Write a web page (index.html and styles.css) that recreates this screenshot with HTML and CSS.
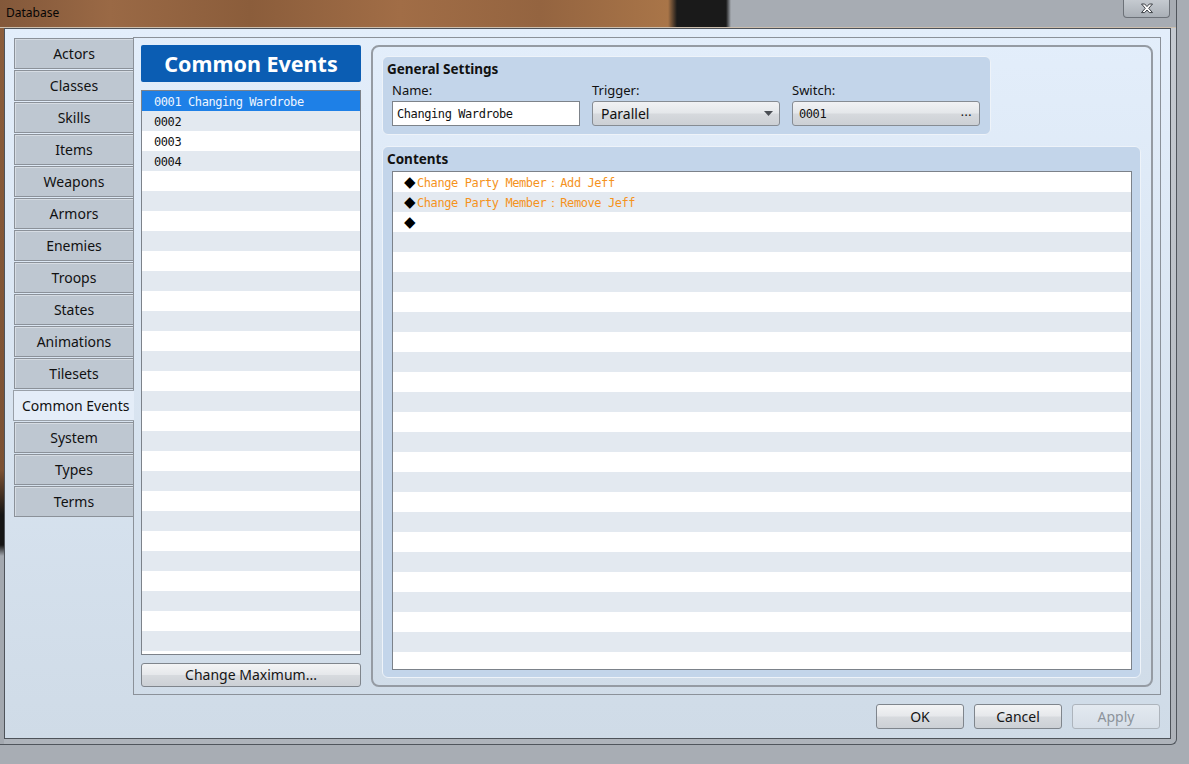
FILE: index.html
```html
<!DOCTYPE html>
<html lang="en">

<head>
  <meta charset="UTF-8">
  <title>Database</title>
  <link rel="stylesheet" href="styles.css">
</head>

<body>
  <div class="window">
    <div class="titlebar">
      <span class="title">Database</span>
      <div class="close">
        <svg width="14" height="11" viewBox="0 0 14 11">
          <path d="M1.5 1h3.2l2.3 2.6 2.3-2.6h3.2l-3.8 4.3 3.8 4.3h-3.2l-2.3-2.6-2.3 2.6h-3.2l3.8-4.3z" fill="#fff" stroke="#3a3e44" stroke-width="1" stroke-linejoin="round"/>
        </svg>
      </div>
    </div>
    <div class="client">
      <div class="main">
        <ul class="tabs">
          <li class="tab">Actors</li>
          <li class="tab">Classes</li>
          <li class="tab">Skills</li>
          <li class="tab">Items</li>
          <li class="tab">Weapons</li>
          <li class="tab">Armors</li>
          <li class="tab">Enemies</li>
          <li class="tab">Troops</li>
          <li class="tab">States</li>
          <li class="tab">Animations</li>
          <li class="tab">Tilesets</li>
          <li class="tab active">Common Events</li>
          <li class="tab">System</li>
          <li class="tab">Types</li>
          <li class="tab">Terms</li>
        </ul>
        <div class="page">
          <div class="events">
            <div class="events-title">Common Events</div>
            <ul class="list event-list">
              <li class="row selected">0001 Changing Wardrobe</li>
              <li class="row">0002</li>
              <li class="row">0003</li>
              <li class="row">0004</li>
            </ul>
            <button class="btn">Change Maximum...</button>
          </div>
          <div class="editor">
            <section class="group general">
              <h3>General Settings</h3>
              <div class="fields">
                <div class="field">
                  <span class="label">Name:</span>
                  <div class="input mono">Changing Wardrobe</div>
                </div>
                <div class="field">
                  <span class="label">Trigger:</span>
                  <div class="select">
                    <span>Parallel</span>
                    <svg width="9" height="5" viewBox="0 0 9 5"><path d="M0 0h9L4.5 5z" fill="#4a4e54"/></svg>
                  </div>
                </div>
                <div class="field">
                  <span class="label">Switch:</span>
                  <div class="picker">
                    <span class="mono">0001</span>
                    <span class="dots">...</span>
                  </div>
                </div>
              </div>
            </section>
            <section class="group contents">
              <h3>Contents</h3>
              <ul class="list command-list">
                <li class="row command"><span class="dia">◆</span>Change Party Member<span class="colon">：</span>Add Jeff</li>
                <li class="row command"><span class="dia">◆</span>Change Party Member<span class="colon">：</span>Remove Jeff</li>
                <li class="row command"><span class="dia">◆</span></li>
              </ul>
            </section>
          </div>
        </div>
      </div>
      <div class="footer">
        <button class="btn action">OK</button>
        <button class="btn action">Cancel</button>
        <button class="btn action" disabled>Apply</button>
      </div>
    </div>
  </div>
</body>

</html>
```

FILE: styles.css
```css
body {
  margin: 0;
  width: 1189px;
  height: 764px;
  overflow: hidden;
  background: #a8adb4;
  font-family: "Noto Sans", "Liberation Sans", sans-serif;
  color: #111;
}

.window {
  width: 1177px;
  height: 745px;
  box-sizing: border-box;
  display: flex;
  flex-direction: column;
  background:
    linear-gradient(to bottom, #8c5e3c 0, #7b5133 470px, #151515 515px, #151515 545px, #a3a8af 556px) left top / 4px 100% no-repeat,
    linear-gradient(to bottom, #c6cbd2, #aeb3ba);
  border-right: 1px solid #50555c;
  border-bottom: 1px solid #50555c;
  border-bottom-right-radius: 6px;
}

.titlebar {
  height: 28px;
  flex: none;
  position: relative;
  background: linear-gradient(to right, #83583a 0, #9a6945 110px, #8b5d3b 250px, #a16d46 400px, #946440 540px, #a97548 668px, #1a1a1a 677px, #1a1a1a 726px, #a7acb3 731px);
  box-shadow: inset 0 -1px 0 #cdbfae;
}

.title {
  display: block;
  padding: 5px 0 0 6px;
  font-size: 12px;
  line-height: 16px;
  color: #050505;
}

.close {
  position: absolute;
  top: 0;
  right: 6px;
  width: 47px;
  height: 18px;
  box-sizing: border-box;
  border: 1px solid #6c7178;
  border-top: none;
  border-radius: 0 0 4px 4px;
  background: linear-gradient(#c5cad0, #aab0b7);
  display: flex;
  align-items: center;
  justify-content: center;
}

.client {
  flex: 1;
  margin: 0 5px 5px 4px;
  border: 1px solid #4e535a;
  background: linear-gradient(#e3eefb, #cfdbe7);
  display: flex;
  flex-direction: column;
  padding: 8px 9px 0 9px;
}

.main {
  display: flex;
  height: 658px;
}

.tabs {
  list-style: none;
  margin: 1px 0 0 0;
  padding: 0;
  width: 119px;
  flex: none;
}

.tab {
  height: 31px;
  margin-bottom: 1px;
  box-sizing: border-box;
  border: 1px solid #8b9199;
  border-right: none;
  background: #bec7d1;
  box-shadow: inset 1px 1px 0 #d6dce3;
  font-size: 14px;
  line-height: 29px;
  text-align: center;
}

.tab.active {
  position: relative;
  z-index: 1;
  width: 121px;
  margin-left: -1px;
  border-color: #99a0a8;
  background: #e4edf8;
  box-shadow: none;
  text-align: left;
  padding-left: 8px;
  white-space: nowrap;
}

.page {
  width: 1028px;
  flex: none;
  box-sizing: border-box;
  border: 1px solid #8b9199;
  padding: 7px;
  display: flex;
  gap: 10px;
}

.events {
  width: 220px;
  display: flex;
  flex-direction: column;
}

.events-title {
  height: 37px;
  margin-bottom: 8px;
  border-radius: 2px;
  background: #0b5db3;
  color: #fff;
  font-size: 21.5px;
  font-weight: bold;
  line-height: 38px;
  text-align: center;
}

.list {
  list-style: none;
  margin: 0;
  padding: 0;
  box-sizing: border-box;
  border: 1px solid #7c828a;
  background: repeating-linear-gradient(#fff 0 20px, #e3e9f0 20px 40px);
}

.event-list {
  height: 565px;
  margin-bottom: 8px;
}

.row {
  height: 20px;
  overflow: hidden;
  padding-left: 12px;
  font-family: "DejaVu Sans Mono", "Liberation Mono", monospace;
  font-size: 12px;
  letter-spacing: -0.42px;
  line-height: 22px;
  white-space: nowrap;
}

.mono {
  font-family: "DejaVu Sans Mono", "Liberation Mono", monospace;
  font-size: 12px;
  letter-spacing: -0.42px;
}

.row.selected {
  background: #1e80e7;
  color: #eef6ff;
}

.btn {
  height: 24px;
  box-sizing: border-box;
  border: 1px solid #7f858c;
  border-radius: 3px;
  background: linear-gradient(#f3f4f5, #e6e8eb 48%, #d7dade 52%, #ccd0d5);
  font-family: "Noto Sans", "Liberation Sans", sans-serif;
  font-size: 14px;
  color: #151515;
  padding: 0;
  line-height: 20px;
}

.editor {
  width: 782px;
  box-sizing: border-box;
  border: 2px solid #959ba3;
  border-radius: 8px;
  padding: 9px 10px 7px 9px;
  display: flex;
  flex-direction: column;
}

.group {
  box-sizing: border-box;
  border: 1px solid #eef3f9;
  border-radius: 6px;
  background: #c3d5ea;
  padding: 4px 8px 0 9px;
}

.group h3 {
  margin: 0 0 0 -5px;
  font-size: 13.5px;
  line-height: 17px;
}

.general {
  width: 609px;
  height: 79px;
  margin-bottom: 11px;
}

.fields {
  display: flex;
  gap: 12px;
  margin-top: 4px;
}

.field {
  width: 188px;
  display: flex;
  flex-direction: column;
  gap: 2px;
}

.label {
  font-size: 13px;
  line-height: 17px;
}

.input,
.select,
.picker {
  height: 25px;
  box-sizing: border-box;
  display: flex;
  align-items: center;
}

.input {
  border: 1px solid #7d838a;
  background: #fff;
  padding-left: 4px;
}

.select,
.picker {
  border: 1px solid #868c93;
  border-radius: 3px;
  background: linear-gradient(#f1f2f4, #e4e7ea 48%, #d6d9dd 52%, #ccd0d5);
  justify-content: space-between;
}

.select {
  padding: 0 6px 0 8px;
  font-size: 14px;
}

.picker {
  padding: 0 7px 0 6px;
}

.dots {
  font-size: 12px;
  letter-spacing: 0.5px;
  padding-bottom: 4px;
}

.contents {
  flex: 1;
  display: flex;
  flex-direction: column;
  padding-bottom: 7px;
}

.command-list {
  flex: 1;
  margin-top: 3px;
}

.command {
  color: #f5931d;
}

.dia {
  display: inline-block;
  width: 13px;
  margin-left: -1px;
  color: #000;
  font-family: "DejaVu Sans", sans-serif;
  font-size: 15px;
  letter-spacing: 0;
  vertical-align: top;
  line-height: 21px;
}

.colon {
  display: inline-block;
  width: 14px;
  text-align: center;
  letter-spacing: 0;
}

.footer {
  display: flex;
  justify-content: flex-end;
  gap: 10px;
  padding: 9px 1px 0 0;
}

.action {
  width: 88px;
  height: 25px;
}

.action:disabled {
  border-color: #adb4bc;
  background: linear-gradient(#e3e9f0, #d6dee7);
  color: #8c939b;
}
```
